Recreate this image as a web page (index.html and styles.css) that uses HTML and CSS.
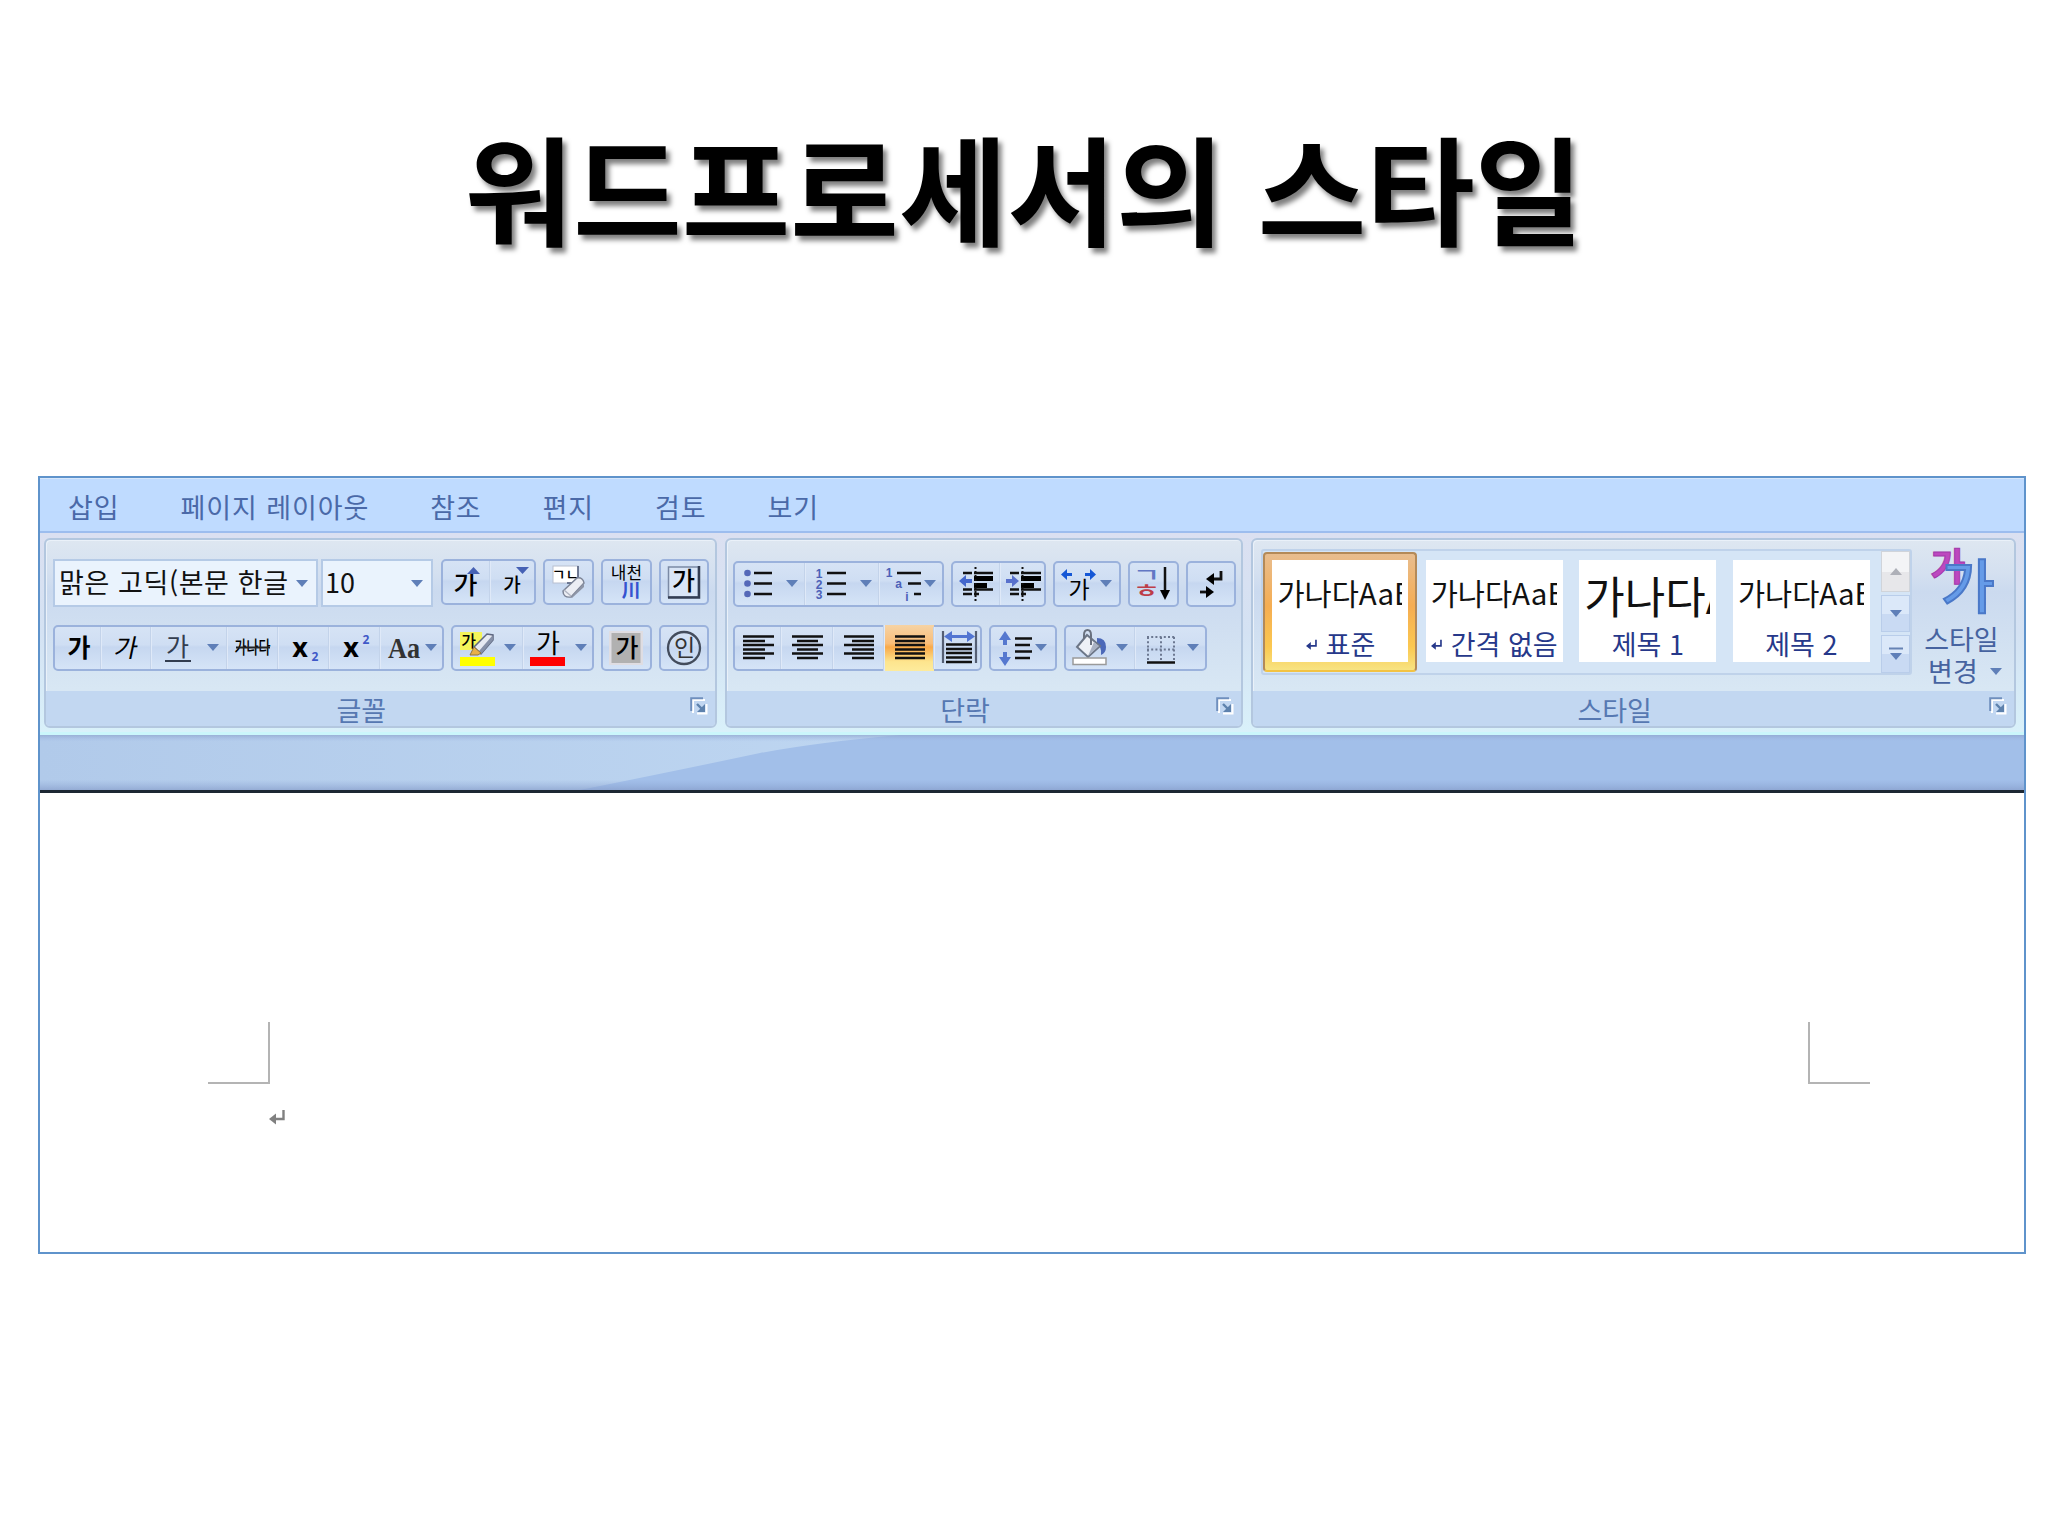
FILE: index.html
```html
<!DOCTYPE html>
<html lang="ko">
<head>
    <meta charset="UTF-8">
    <meta name="viewport" content="width=device-width, initial-scale=1.0">
    <title>워드프로세서의 스타일</title>
    <link rel="stylesheet" href="styles.css">
</head>
<body>
    <!-- Shared shapes -->
    <svg class="defs" width="0" height="0">
        <defs>
            <symbol id="caret" viewBox="0 0 12 7"><path d="M0 0H12L6 7Z" fill="#5f7fb8"/></symbol>
            <symbol id="launcher" viewBox="0 0 18 18">
                <path d="M3 16V3H15" fill="none" stroke="#fff" stroke-width="2"/>
                <path d="M1.2 14V1.2H13" fill="none" stroke="#6f8fbd" stroke-width="2"/>
                <path d="M7 16.5H16.5V7" fill="none" stroke="#fff" stroke-width="2"/>
                <path d="M15 7V15H7Z" fill="#5e82ad"/>
                <path d="M7 7L12 12" stroke="#5e82ad" stroke-width="2.4"/>
            </symbol>
            <symbol id="enter" viewBox="0 0 16 16">
                <path d="M14.5 1V10H6" fill="none" stroke="currentColor" stroke-width="2.4"/>
                <path d="M0 10L7 4.5V15.5Z" fill="currentColor"/>
            </symbol>
        </defs>
    </svg>

    <h1 class="title">워드프로세서의 스타일</h1>

    <div class="window">
        <div class="tabs">
            <span>삽입</span>
            <span>페이지 레이아웃</span>
            <span>참조</span>
            <span>편지</span>
            <span>검토</span>
            <span>보기</span>
        </div>

        <div class="ribbon">
            <!-- Font -->
            <div class="panel panel-font">
                <div class="panel-body">
                    <div class="row">
                        <div class="combos">
                            <div class="combo combo-name"><span>맑은 고딕(본문 한글</span><svg width="12" height="7"><use href="#caret"/></svg></div>
                            <div class="combo combo-size"><span>10</span><svg width="12" height="7"><use href="#caret"/></svg></div>
                        </div>
                        <div class="group">
                            <svg class="cell" width="47" height="42">
                                <text class="ko medium" x="22.500" y="33" font-size="26">가</text>
                                <path d="M24 13L30.500 6L37 13Z" fill="#4661b4"/>
                            </svg>
                            <svg class="cell" width="44" height="42">
                                <text class="ko medium" x="22" y="31" font-size="19">가</text>
                                <path d="M26 6H39L32.500 13Z" fill="#4661b4"/>
                            </svg>
                        </div>
                        <div class="group">
                            <svg class="cell" width="47" height="42">
                                <rect x="8" y="5" width="25" height="17" fill="#fff" stroke="#b8bfd0"/>
                                <path d="M33 5V22H22" fill="none" stroke="#4d5a78" stroke-width="1.500"/>
                                <text class="ko medium" x="20.500" y="18.500" font-size="15">ㄱㄴ</text>
                                <path d="M18 30L32 17Q38 16 39 22L26 36Q18 37 18 30Z" fill="#eceef4" stroke="#7c8496" stroke-width="1.500"/>
                                <path d="M26 36L39 22V26L27 37Z" fill="#8e95a6"/>
                                <path d="M19 29L26 35" stroke="#b0b5c2" stroke-width="1.500"/>
                            </svg>
                        </div>
                        <div class="group">
                            <svg class="cell" width="47" height="42">
                                <text class="ko" x="23.500" y="17.500" font-size="17">내천</text>
                                <text class="ko bold" x="28" y="36" font-size="19" fill="#3553d0">川</text>
                            </svg>
                        </div>
                        <div class="group">
                            <svg class="cell" width="46" height="42">
                                <rect x="7.500" y="6" width="30" height="30" fill="#d9e5f6" stroke="#7b8aa5" stroke-width="1.500"/>
                                <path d="M38 5V36.500H7" fill="none" stroke="#333d52" stroke-width="2.500"/>
                                <text class="ko medium" x="22.500" y="29" font-size="25">가</text>
                            </svg>
                        </div>
                    </div>
                    <div class="row">
                        <div class="group">
                            <svg class="cell" width="46" height="42"><text class="ko bold" x="24" y="30" font-size="25">가</text></svg>
                            <svg class="cell" width="50" height="42"><text class="ko slant" x="30" y="30" font-size="25">가</text></svg>
                            <svg class="cell" width="76" height="42">
                                <text class="ko" x="26.500" y="29" font-size="25" fill="#333d4f">가</text>
                                <path d="M14 34H40" stroke="#333d4f" stroke-width="2"/>
                                <use href="#caret" x="56" y="17" width="12" height="7"/>
                            </svg>
                            <svg class="cell" width="51" height="42">
                                <text class="ko medium" x="25.500" y="26.500" font-size="18" textLength="36" lengthAdjust="spacingAndGlyphs">가나다</text>
                                <path d="M9 20.500H43" stroke="#222" stroke-width="2"/>
                            </svg>
                            <svg class="cell" width="51" height="42">
                                <text class="latin bold" x="22" y="30" font-size="27">x</text>
                                <text class="latin bold" x="37" y="34" font-size="12" fill="#4058c8">2</text>
                            </svg>
                            <svg class="cell" width="51" height="42">
                                <text class="latin bold" x="22" y="30" font-size="27">x</text>
                                <text class="latin bold" x="37" y="17" font-size="12" fill="#4058c8">2</text>
                            </svg>
                            <svg class="cell" width="62" height="42">
                                <text class="serif bold" x="24" y="31" font-size="29" fill="#333" textLength="32" lengthAdjust="spacingAndGlyphs">Aa</text>
                                <use href="#caret" x="45" y="17" width="12" height="7"/>
                            </svg>
                        </div>
                        <div class="group">
                            <svg class="cell" width="70" height="42">
                                <rect x="7" y="5" width="22" height="18" fill="#f4f45a"/>
                                <text class="ko medium" x="15.500" y="19.500" font-size="16">가</text>
                                <path d="M21 20L34 7L40 8L40 13L28 27Z" fill="#e6e9f2" stroke="#5e6780" stroke-width="1.500"/>
                                <path d="M28 27L40 13L39 9L26 24Z" fill="#8690a8"/>
                                <path d="M21 20L28 26L25 28H17Z" fill="#e8b04a" stroke="#8d7443"/>
                                <rect x="7" y="30" width="35" height="9" fill="#ffff00"/>
                                <use href="#caret" x="51" y="17" width="12" height="7"/>
                            </svg>
                            <svg class="cell" width="69" height="42">
                                <text class="ko" x="25" y="26" font-size="26">가</text>
                                <rect x="7" y="30" width="35" height="9" fill="#ff0000"/>
                                <use href="#caret" x="52" y="17" width="12" height="7"/>
                            </svg>
                        </div>
                        <div class="group">
                            <svg class="cell" width="47" height="42">
                                <rect x="6" y="4" width="34" height="34" fill="#dfdde2"/>
                                <rect x="8.500" y="6" width="29" height="30" fill="#b1b1b1"/>
                                <text class="ko medium" x="24" y="30" font-size="25">가</text>
                            </svg>
                        </div>
                        <div class="group">
                            <svg class="cell" width="46" height="42">
                                <circle cx="23" cy="21" r="16" fill="none" stroke="#434c5c" stroke-width="2.300"/>
                                <text class="ko" x="23.500" y="28.500" font-size="23" fill="#333">인</text>
                            </svg>
                        </div>
                    </div>
                </div>
                <div class="panel-label"><span>글꼴</span><svg width="18" height="18"><use href="#launcher"/></svg></div>
            </div>

            <!-- Paragraph -->
            <div class="panel panel-paragraph">
                <div class="panel-body">
                    <div class="row">
                        <div class="group">
                            <svg class="cell" width="70" height="42">
                                <g fill="#5468b8"><circle cx="12.500" cy="10" r="3.300"/><circle cx="12.500" cy="20.500" r="3.300"/><circle cx="12.500" cy="31" r="3.300"/></g>
                                <path class="line" d="M19 10H37M19 20.500H37M19 31H37"/>
                                <use href="#caret" x="51" y="17" width="12" height="7"/>
                            </svg>
                            <svg class="cell" width="74" height="42">
                                <g class="num"><text x="14" y="14.500">1</text><text x="14" y="25.500">2</text><text x="14" y="36">3</text></g>
                                <path class="line" d="M22 10H41M22 20.500H41M22 31H41"/>
                                <use href="#caret" x="55" y="17" width="12" height="7"/>
                            </svg>
                            <svg class="cell" width="63" height="42">
                                <g class="num"><text x="10" y="14">1</text><text x="19.500" y="25">a</text><text x="28" y="38">i</text></g>
                                <path class="line" d="M18 10H42M29 20.500H42M35 31H42"/>
                                <use href="#caret" x="45" y="17" width="12" height="7"/>
                            </svg>
                        </div>
                        <div class="group">
                            <svg class="cell" width="47" height="42">
                                <path class="line" d="M10 10H19M10 26.500H19M10 31H19M21 10H40M21 26.500H40M21 31H26"/>
                                <path d="M21 13H40V18H21ZM21 20H34V25H21Z"/>
                                <path d="M22.500 4V38" stroke="#111" stroke-width="2" stroke-dasharray="2 2"/>
                                <path d="M6 18L13 12V16H19V20H13V24Z" fill="#4467cc"/>
                            </svg>
                            <svg class="cell" width="44" height="42">
                                <path class="line" d="M10 10H19M10 26.500H19M10 31H19M21 10H41M21 26.500H41M21 31H26"/>
                                <path d="M21 13H41V18H21ZM21 20H34V25H21Z"/>
                                <path d="M22.500 4V38" stroke="#111" stroke-width="2" stroke-dasharray="2 2"/>
                                <path d="M19 18L12 12V16H6V20H12V24Z" fill="#5870cc"/>
                            </svg>
                        </div>
                        <div class="group">
                            <svg class="cell" width="64" height="42">
                                <path d="M6 11.500L12 6V10H17V13H12V17Z" fill="#1557d6"/>
                                <path d="M41 11.500L35 6V10H30V13H35V17Z" fill="#1557d6"/>
                                <text class="ko" x="24" y="35" font-size="23">가</text>
                                <use href="#caret" x="45" y="17" width="12" height="7"/>
                            </svg>
                        </div>
                        <div class="group">
                            <svg class="cell" width="47" height="42">
                                <text class="ko medium sort-letter" x="10.300" y="19" font-size="19" fill="#6277c4">ㄱ</text>
                                <text class="ko medium sort-letter" x="10.300" y="35" font-size="19" fill="#bd3d48">ㅎ</text>
                                <path d="M35 4V30" stroke="#111" stroke-width="2.500"/>
                                <path d="M30 27H40L35 37Z"/>
                            </svg>
                        </div>
                        <div class="group">
                            <svg class="cell" width="46" height="42">
                                <path d="M33 8V16H25" fill="none" stroke="#111" stroke-width="2.800"/>
                                <path d="M18 16L26 10V22Z"/>
                                <path d="M12 29H20" stroke="#111" stroke-width="2.800"/>
                                <path d="M26 29L18 23V35Z"/>
                            </svg>
                        </div>
                    </div>
                    <div class="row">
                        <div class="group">
                            <svg class="cell" width="46" height="42"><path class="line" d="M8 9.500H39M8 14H30M8 18H39M8 22.500H30M8 26.500H39M8 31H30"/></svg>
                            <svg class="cell" width="52" height="42"><path class="line" d="M11 9.500H42M16 14H37M11 18H42M16 22.500H37M11 26.500H42M16 31H37"/></svg>
                            <svg class="cell" width="51" height="42"><path class="line" d="M11 9.500H41M19 14H41M11 18H41M19 22.500H41M11 26.500H41M19 31H41"/></svg>
                            <svg class="cell cell-active" width="50" height="46"><path class="line" d="M11 11.500H41M11 16H41M11 20H41M11 24.500H41M11 28.500H41M11 33H41"/></svg>
                            <svg class="cell" width="46" height="42">
                                <path d="M9 4V36M42 4V36" stroke="#555f74" stroke-width="2.200"/>
                                <path d="M10 9.500L18 4V8H33V4L41 9.500L33 15V11H18V15Z" fill="#5275d2"/>
                                <path class="line" d="M12 17.500H38M12 22H38M12 26H38M12 30.500H38M12 35H38"/>
                            </svg>
                        </div>
                        <div class="group">
                            <svg class="cell" width="64" height="42">
                                <path d="M14 4L20 13H16V18H12V13H8Z" fill="#5578cf"/>
                                <path d="M14 39L20 30H16V25H12V30H8Z" fill="#5578cf"/>
                                <path class="line" d="M24 11.500H41M24 18H39M24 24.500H41M24 31H39"/>
                                <use href="#caret" x="44" y="17" width="12" height="7"/>
                            </svg>
                        </div>
                        <div class="group">
                            <svg class="cell" width="69" height="42">
                                <path d="M31 11Q40 11 40 20Q40 26 35 28Q36 20 31 17Z" fill="#4b68b8"/>
                                <path d="M11 20L21 8L34 19L22 30Z" fill="#eef1f7" stroke="#6c7687" stroke-width="2"/>
                                <path d="M22 29L33 19L28 15Z" fill="#a9b2c3"/>
                                <path d="M18 12V8Q18 3 21.500 3Q25 3 25 8V18" fill="none" stroke="#69717f" stroke-width="2"/>
                                <rect x="7" y="31" width="33" height="6.500" fill="#fff" stroke="#9a9a9a" stroke-width="1.500"/>
                                <use href="#caret" x="50" y="17" width="12" height="7"/>
                            </svg>
                            <svg class="cell" width="70" height="42">
                                <path d="M12 10H40M12 22.500H40M13 10V34M26 10V34M39 10V34" fill="none" stroke="#6c7891" stroke-width="2" stroke-dasharray="2 2.200"/>
                                <path d="M12 35.500H40" stroke="#111" stroke-width="2.500"/>
                                <use href="#caret" x="52" y="17" width="12" height="7"/>
                            </svg>
                        </div>
                    </div>
                </div>
                <div class="panel-label"><span>단락</span><svg width="18" height="18"><use href="#launcher"/></svg></div>
            </div>

            <!-- Styles -->
            <div class="panel panel-styles">
                <div class="panel-body">
                    <div class="gallery">
                        <div class="styles">
                            <div class="style selected">
                                <div class="preview">가나다AaB</div>
                                <div class="name"><svg width="11" height="13"><use href="#enter"/></svg>표준</div>
                            </div>
                            <div class="style">
                                <div class="preview">가나다AaB</div>
                                <div class="name"><svg width="11" height="13"><use href="#enter"/></svg>간격 없음</div>
                            </div>
                            <div class="style">
                                <div class="preview large">가나다A</div>
                                <div class="name">제목 1</div>
                            </div>
                            <div class="style">
                                <div class="preview">가나다AaB</div>
                                <div class="name">제목 2</div>
                            </div>
                        </div>
                        <div class="scroller">
                            <div class="scroll-up"><svg width="12" height="7"><path d="M0 7H12L6 0Z" fill="#aeb0b8"/></svg></div>
                            <div class="scroll-down"><svg width="12" height="7"><use href="#caret"/></svg></div>
                            <div class="scroll-more"><svg width="16" height="14"><path d="M1 1.500H15" stroke="#6683b4" stroke-width="2"/><path d="M2 6H14L8 13Z" fill="#5f7fb8"/></svg></div>
                        </div>
                    </div>
                    <div class="change">
                        <svg width="80" height="72">
                            <text class="ko bold" x="27" y="34" font-size="38" fill="#bd48bf" stroke="#a238aa" stroke-width="1">가</text>
                            <text class="ko medium" x="47" y="62" font-size="58" fill="#659be8" stroke="#4a78c8" stroke-width="2">가</text>
                        </svg>
                        <span>스타일</span>
                        <span class="change-second">변경<svg width="12" height="7"><use href="#caret"/></svg></span>
                    </div>
                </div>
                <div class="panel-label"><span>스타일</span><svg width="18" height="18"><use href="#launcher"/></svg></div>
            </div>
        </div>

        <svg class="band" width="1984" height="58" viewBox="0 0 1984 58">
            <defs>
                <linearGradient id="glow" x1="0" x2="1" y1="0" y2="0">
                    <stop offset="0" stop-color="#b1caea"/>
                    <stop offset="1" stop-color="#bed6f1"/>
                </linearGradient>
                <linearGradient id="fade" x1="0" x2="0" y1="0" y2="1">
                    <stop offset="0" stop-color="#8fa5cd" stop-opacity=".7"/>
                    <stop offset=".12" stop-color="#a3bce8" stop-opacity="0"/>
                    <stop offset=".8" stop-color="#8fa8d8" stop-opacity="0"/>
                    <stop offset="1" stop-color="#8298c5" stop-opacity=".7"/>
                </linearGradient>
            </defs>
            <rect width="1984" height="58" fill="#a2bfe9"/>
            <path d="M0 0H860Q780 7 720 18Q640 35 535 56H0Z" fill="url(#glow)"/>
            <rect width="1984" height="56" fill="url(#fade)"/>
            <rect y="55" width="1984" height="3" fill="#1d2733"/>
        </svg>

        <div class="page">
            <div class="margin-left">
                <div class="corner corner-left"></div>
                <svg class="mark" width="16" height="16"><use href="#enter"/></svg>
            </div>
            <div class="corner corner-right"></div>
        </div>
    </div>
</body>
</html>
```
FILE: styles.css
```css
* {
    box-sizing: border-box;
}
body {
    margin: 0;
    background-color: #fff;
    font-family: "Noto Sans CJK KR", "Noto Sans", sans-serif;
}
svg {
    display: block;
    flex: none;
    overflow: visible;
}
.defs {
    position: absolute;
}
.title {
    margin: 106px 0 210px;
    line-height: 160px;
    font-size: 118px;
    font-weight: bold;
    text-align: center;
    color: #000;
    text-shadow: 4px 5px 5px rgba(0,0,0,0.5);
}
.window {
    width: 1988px;
    height: 778px;
    margin-left: 38px;
    border: 2px solid #5f93cb;
    background-color: #fff;
}

/* Tabs */
.tabs {
    display: flex;
    gap: 61px;
    height: 55px;
    padding-left: 28px;
    border-top: 1px solid #d7e7fb;
    border-bottom: 2px solid #9dbdee;
    background-color: #bfdbff;
    color: #4a69a8;
    font-size: 27px;
    letter-spacing: 0.9px;
    line-height: 56px;
    white-space: nowrap;
}

/* Ribbon */
.ribbon {
    display: flex;
    gap: 8px;
    height: 202px;
    padding: 5px 8px 0 4px;
    border-bottom: 3px solid #cbf6fb;
    background: linear-gradient(#dbe0f1, #d4e2f3 50%, #d9f1fa);
}
.panel {
    display: flex;
    flex-direction: column;
    height: 190px;
    border: 2px solid #b3c7df;
    border-radius: 6px;
    background: linear-gradient(#dee7f1, #d4e0f0 18%, #cbdaef 28%, #d8e7f4 80%);
    box-shadow: inset 1px 1px 0 #eaf1f9;
}
.panel-font {
    width: 673px;
}
.panel-paragraph {
    width: 519px;
}
.panel-styles {
    width: 765px;
}
.panel-body {
    height: 151px;
}
.panel-font .panel-body {
    padding: 19px 0 0 7px;
}
.panel-paragraph .panel-body {
    padding: 21px 0 0 6px;
}
.panel-label {
    display: flex;
    height: 35px;
    padding-right: 7px;
    background-color: #c2d7f1;
    border-radius: 0 0 4px 4px;
    color: #5678b2;
    font-size: 27px;
}
.panel-label span {
    flex: 1;
    padding-left: 7px;
    padding-right: 20px;
    text-align: center;
    line-height: 38px;
}
.panel-label svg {
    margin-top: 6px;
}
.row {
    display: flex;
    gap: 7px;
    height: 46px;
    margin-bottom: 20px;
}
.panel-paragraph .row {
    margin-bottom: 18px;
}
.combos {
    display: flex;
    gap: 3px;
    margin-right: 1px;
}
.combo {
    display: flex;
    align-items: center;
    justify-content: space-between;
    height: 48px;
    padding: 0 8px 0 4px;
    border: 2px solid #b5cae6;
    background-color: #eaf3fd;
    color: #111;
    font-size: 27px;
    line-height: 42px;
    white-space: nowrap;
}
.combo span {
    height: 44px;
}
.combo-name {
    width: 265px;
}
.combo-name span {
    letter-spacing: 0.6px;
}
.combo-size {
    width: 112px;
    padding-left: 2px;
}
.group {
    display: flex;
    height: 46px;
    border: 2px solid #9bb2dc;
    border-radius: 5px;
    background: linear-gradient(#d6e3f5, #cfdef3 42%, #c6d7f0 48%, #d5e4f7);
}
.cell {
    box-shadow: inset 1px 0 0 #dfe9f8, -1px 0 0 #c3d3ea;
}
.cell:first-child {
    box-shadow: none;
}
.cell-active {
    margin-top: -2px;
    background: linear-gradient(#f6d3a4, #f9bd78 40%, #f8a94a 48%, #fde58e 80%, #fdeb9c);
}
.cell text {
    text-anchor: middle;
}
.ko {
    font-family: "Noto Sans CJK KR", sans-serif;
}
.latin {
    font-family: "Noto Sans", sans-serif;
}
.serif {
    font-family: "Liberation Serif", serif;
}
.bold {
    font-weight: bold;
}
.medium {
    font-weight: 500;
}
.slant {
    transform: skewX(-12deg);
}
.sort-letter {
    transform: scaleX(1.6);
}
.line {
    fill: none;
    stroke: #111;
    stroke-width: 2.5;
}
.num {
    font-family: "Liberation Sans", sans-serif;
    font-size: 12px;
    font-weight: bold;
    fill: #4c61b8;
}

/* Style gallery */
.panel-styles .panel-body {
    display: flex;
    padding: 9px 0 0 8px;
}
.gallery {
    display: flex;
    width: 651px;
    height: 126px;
    border: 2px solid #bfd2ea;
    border-radius: 3px;
    background-color: #d5e5f6;
}
.styles {
    display: flex;
    width: 618px;
    padding-top: 1px;
}
.style {
    width: 137px;
    height: 102px;
    margin: 8px 8.3px;
    padding: 0 6px;
    background-color: #fff;
    flex: none;
}
.style.selected {
    width: 154px;
    height: 120px;
    margin: 0;
    padding: 6px 13px;
    border: 2px solid #b48a58;
    border-bottom-color: #f3c343;
    border-radius: 4px;
    background: linear-gradient(#fff, #fff) 7px 6px / 136px 102px no-repeat, linear-gradient(#e8bd8f, #f5ad52 45%, #fbc850 80%, #f7e382);
}
.preview {
    height: 64px;
    margin-left: -1px;
    overflow: hidden;
    color: #111;
    font-size: 29.5px;
    line-height: 64px;
    white-space: nowrap;
}
.preview.large {
    font-size: 44px;
    line-height: 70px;
}
.name {
    display: flex;
    align-items: center;
    justify-content: center;
    gap: 9px;
    margin: 0 -8px;
    color: #26388a;
    font-size: 27px;
    line-height: 40px;
    white-space: nowrap;
}
.scroller {
    display: flex;
    flex-direction: column;
    gap: 3px;
    width: 29px;
}
.scroller div {
    display: flex;
    align-items: center;
    justify-content: center;
    height: 38px;
    border: 1px solid #b9cdea;
    background: linear-gradient(#dbe8f9 50%, #c9daf3 50%);
}
.scroller .scroll-up {
    height: 41px;
    border-color: #d0d4da;
    background: linear-gradient(#f3f4f6 50%, #e7e7ea 50%);
}
.change {
    display: flex;
    flex-direction: column;
    align-items: center;
    width: 98px;
    margin-top: -3px;
    color: #4663a0;
    font-size: 27px;
    line-height: 32px;
}
.change text {
    text-anchor: middle;
}
.change span {
    margin-top: 5px;
}
.change .change-second {
    display: flex;
    align-items: center;
    gap: 12px;
    margin-top: 0;
    padding-left: 7px;
}

/* Document */
.page {
    display: flex;
    justify-content: space-between;
    padding: 229px 154px 0 168px;
}
.corner {
    width: 62px;
    height: 62px;
    border-bottom: 2px solid #b4b4b4;
}
.corner-left {
    border-right: 2px solid #b4b4b4;
}
.corner-right {
    border-left: 2px solid #b4b4b4;
}
.mark {
    margin: 25px 0 0 61px;
    color: #808080;
}
```
